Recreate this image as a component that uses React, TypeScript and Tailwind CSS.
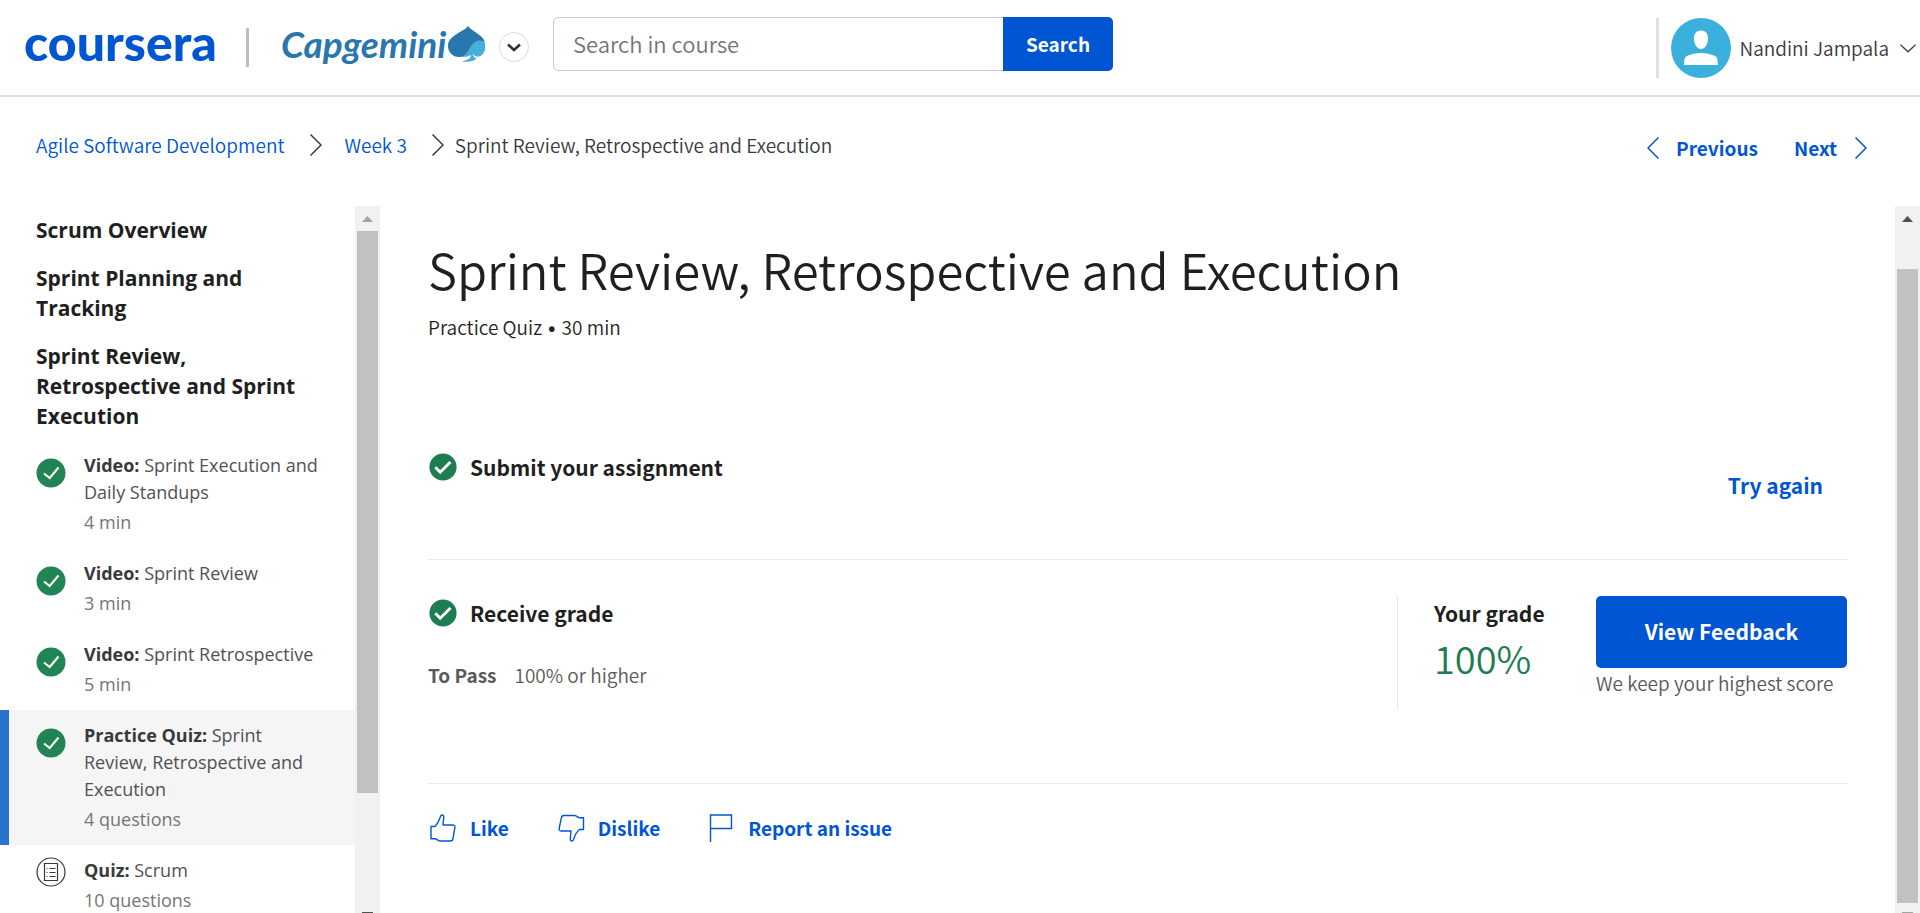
import type { ReactNode } from "react";

const sans = "font-['Noto_Sans_CJK_SC','Noto_Sans',sans-serif]";

function CheckBadge({ className }: { className: string }) {
  return (
    <svg viewBox="0 0 28 28" className={className} aria-hidden="true">
      <circle cx="14" cy="14" r="13.600" fill="currentColor" />
      <path d="M6.300 14.300l4.900 4.900L21.500 9" fill="none" stroke="#fff" strokeWidth="3" />
    </svg>
  );
}

function ThinCheckBadge({ className }: { className: string }) {
  return (
    <svg viewBox="0 0 30 30" className={className} aria-hidden="true">
      <circle cx="15" cy="15" r="14.500" fill="currentColor" />
      <path d="M8 15.500l5.700 4.500L22.500 9.500" fill="none" stroke="#fff" strokeWidth="2" />
    </svg>
  );
}

function QuizBadge() {
  return (
    <svg viewBox="0 0 30 30" className="size-[30px]" fill="none" stroke="#373a3c" aria-hidden="true">
      <circle cx="15" cy="15" r="14" strokeWidth="1.200" />
      <path d="M8.500 6.500h13v17h-13zM13.500 11.500h6M13.500 15.500h6M13.500 19.500h6M10.500 11.500h1M10.500 15.500h1M10.500 19.500h1" strokeWidth="1.200" />
    </svg>
  );
}

function Chevron({ left = false, className = "" }: { left?: boolean; className?: string }) {
  return (
    <svg viewBox="0 0 12 22" className={"h-[22px] w-3 shrink-0 " + className} fill="none" stroke="currentColor" strokeWidth="1.500" aria-hidden="true">
      <path d={left ? "M11.500.5L1 11l10.500 10.500" : "M.5.5L11 11 .5 21.500"} />
    </svg>
  );
}

function ScrollTrack({ arrow, children }: { arrow: string; children: ReactNode }) {
  return (
    <div className="flex w-[25px] shrink-0 flex-col bg-[#f1f1f1] px-[2px]" aria-hidden="true">
      <svg viewBox="0 0 21 25" className={"h-[25px] w-[21px] shrink-0 " + arrow}>
        <path d="M5 16l5.500-6 5.500 6z" fill="currentColor" />
      </svg>
      {children}
    </div>
  );
}

type Item = { kind: string; name: string; meta: string; done: boolean; active?: boolean };

const items: Item[] = [
  { kind: "Video:", name: "Sprint Execution and Daily Standups", meta: "4 min", done: true },
  { kind: "Video:", name: "Sprint Review", meta: "3 min", done: true },
  { kind: "Video:", name: "Sprint Retrospective", meta: "5 min", done: true },
  { kind: "Practice Quiz:", name: "Sprint Review, Retrospective and Execution", meta: "4 questions", done: true, active: true },
  { kind: "Quiz:", name: "Scrum", meta: "10 questions", done: false },
];

function Header() {
  return (
    <header className="flex h-[97px] shrink-0 items-start border-b-2 border-[#e1e1e1] pl-6">
      <a href="#home" className="mt-3 w-[192px] font-['Lato',sans-serif] text-[50px] leading-[60px] font-black text-[#0056d2]">
        coursera
      </a>
      <div className="mt-7 ml-[30px] h-[39px] w-[3px] bg-[#bdbdbd]" />
      <a href="#capgemini" className="mt-4 ml-8 flex items-start text-[#2a76ae]">
        <span className="w-[167px] font-['Lato',sans-serif] text-[37px] leading-[56px] font-bold italic">Capgemini</span>
        <svg viewBox="0 0 37 36" className="mt-[10px] h-9 w-[37px]" aria-hidden="true">
          <path d="M20 0C16 6 0 9 0 20c0 6 4.500 11 11 11 5 0 9-2.500 11-6.500 2-5 6-9 11-9.500 2 0 3.500 1 4 3C37 9 24 6 20 0z" fill="#2a76ae" />
          <path d="M37 18c-.5-3-3-4-6-3.500-5.500 1-8.500 5.500-11 10.500-2 3-4 5-7.500 5.800 4 .5 8-.3 10.500-1.800 0 3-3 5-9 6.200 5 1.200 11.500.5 14.500-2.500-2-1-3.500-2.500-4-5 2 2.500 5 3.500 7.500 2.500 4-1.500 6-7 5-12.200z" fill="#46aedb" />
        </svg>
      </a>
      <button type="button" aria-label="Switch program" className="mt-8 ml-[14px] flex size-[30px] items-center justify-center rounded-full border border-[#dcdcdc]">
        <svg viewBox="0 0 14 9" className="h-[9px] w-[14px]" fill="none" stroke="#2b3137" strokeWidth="2.600" aria-hidden="true">
          <path d="M1 1.500l6 5.500 6-5.500" />
        </svg>
      </button>
      <form className="mt-[17px] ml-6 flex h-[54px]">
        <input
          type="text"
          aria-label="Search in course"
          placeholder="Search in course"
          className="w-[450px] rounded-l-[5px] border border-r-0 border-[#c7cdd6] px-[19px] pb-px text-[22px] font-[350] placeholder:text-[#757575]"
        />
        <button type="button" className="w-[110px] rounded-r-[5px] bg-[#0056d2] text-[19px] font-bold text-white">
          Search
        </button>
      </form>
      <button type="button" className="mt-[18px] mr-1 ml-auto flex h-[60px] items-center border-l-[3px] border-[#e1e1e1] pl-3 text-[19px] font-[350] text-[#373a3c]">
        <svg viewBox="0 0 60 60" className="mr-[9px] size-[60px]" aria-hidden="true">
          <circle cx="30" cy="30" r="30" fill="#3cb0dd" />
          <path d="M30 12.500c4.500 0 7.200 3 7 8-.2 6-3 10.500-7 10.500s-6.800-4.500-7-10.500c-.2-5 2.500-8 7-8zM13 47c.3-6 .8-8.500 4-9.500 4-1.300 8-2.500 13-2.500s9 1.200 13 2.500c3.200 1 3.700 3.500 4 9.500z" fill="#fff" />
        </svg>
        Nandini Jampala
        <svg viewBox="0 0 16 9" className="ml-[11px] h-[9px] w-4" fill="none" stroke="#424242" strokeWidth="1.400" aria-hidden="true">
          <path d="M.5.8L8 7.800l7.500-7" />
        </svg>
      </button>
    </header>
  );
}

function Trail() {
  return (
    <div className="flex h-[109px] shrink-0 items-center justify-between pr-[53px] pb-2 pl-9 text-[19px] leading-7">
      <nav aria-label="Breadcrumb" className="flex items-center pb-[5px] font-[350]">
        <a href="#course" className="text-[#0056d2]">Agile Software Development</a>
        <Chevron className="ml-[26px] text-[#373a3c]" />
        <a href="#week3" className="ml-[22px] text-[#0056d2]">Week 3</a>
        <Chevron className="ml-[25px] text-[#373a3c]" />
        <span className="ml-[11px] text-[#373a3c]">Sprint Review, Retrospective and Execution</span>
      </nav>
      <nav aria-label="Lesson" className="flex items-center gap-9 font-bold text-[#0056d2]">
        <a href="#previous" className="flex items-center gap-[17px]">
          <Chevron left />
          Previous
        </a>
        <a href="#next" className="flex items-center gap-[18px]">
          Next
          <Chevron />
        </a>
      </nav>
    </div>
  );
}

function Sidebar() {
  return (
    <aside className="flex w-[380px] shrink-0 font-['Open_Sans',sans-serif]">
      <div className="min-w-0 flex-1 overflow-hidden">
        {["Scrum Overview", "Sprint Planning and Tracking", "Sprint Review, Retrospective and Sprint Execution"].map((t) => (
          <h2 key={t} className="py-[9px] pr-12 pl-9 text-[21px] leading-[30px] font-bold text-[#1f1f1f]">
            {t}
          </h2>
        ))}
        <ul>
          {items.map((it) => (
            <li key={it.kind + it.name}>
              <a
                href="#item"
                className={
                  "flex gap-[18px] border-l-[9px] py-3 pr-[30px] pl-[27px] text-[18px] leading-[27px] " +
                  (it.active ? "border-[#2a73cc] bg-[#f5f5f5]" : "border-transparent")
                }
              >
                <span className={"shrink-0 " + (it.done ? "pt-[6px]" : "")}>
                  {it.done ? <ThinCheckBadge className="size-[30px] text-[#208454]" /> : <QuizBadge />}
                </span>
                <span>
                  <span className="block text-[#4f5254]">
                    <strong className="font-bold text-[#373a3c]">{it.kind}</strong> {it.name}
                  </span>
                  <span className="mt-[3px] block text-[#757575]">{it.meta}</span>
                </span>
              </a>
            </li>
          ))}
        </ul>
      </div>
      <ScrollTrack arrow="text-[#a3a3a3]">
        <div className="h-[562px] bg-[#c1c1c1]" />
        <div className="mt-auto h-px w-[11px] self-center bg-[#505050]" />
      </ScrollTrack>
    </aside>
  );
}

function Content() {
  return (
    <main className="min-w-0 flex-1 overflow-hidden pr-12 pl-12">
      <h1 className="mt-[27px] text-[49px] leading-[72px] font-[350] text-[#1f1f1f]">Sprint Review, Retrospective and Execution</h1>
      <p className="mt-2 text-[19px] leading-7 font-[350] text-[#1f1f1f]">
        Practice Quiz <span className="font-['Lato',sans-serif]">•</span> 30 min
      </p>

      <section className="mt-[98px] flex items-start justify-between border-b border-[#e5e7e8] pb-[59px]">
        <h2 className="flex items-center gap-[13px] pt-3 pl-px text-[21px] leading-[30px] font-bold text-[#1f1f1f]">
          <CheckBadge className="size-7 text-[#1d7c50]" />
          Submit your assignment
        </h2>
        <button type="button" className="mt-[30px] mr-6 text-[21px] leading-[30px] font-bold text-[#0056d2]">
          Try again
        </button>
      </section>

      <section className="flex items-start border-b border-[#e5e7e8] pt-9 pb-[73px]">
        <div className="flex-1">
          <h2 className="flex items-center gap-[13px] pt-[2px] pl-px text-[21px] leading-[30px] font-bold text-[#1f1f1f]">
            <CheckBadge className="size-7 text-[#1d7c50]" />
            Receive grade
          </h2>
          <p className="mt-[33px] flex gap-[18px] text-[19px] leading-7 font-[350] text-[#5a5a5a]">
            <strong className="font-bold">To Pass</strong>
            <span>100% or higher</span>
          </p>
        </div>
        <div className="h-[114px] w-[199px] border-l border-[#e5e7e8] pt-[2px] pl-9">
          <h3 className="text-[21px] leading-[30px] font-bold text-[#1f1f1f]">Your grade</h3>
          <p className="text-[38px] leading-[60px] font-[350] text-[#1d7c50]">100%</p>
        </div>
        <div className="w-[251px]">
          <button type="button" className="h-[72px] w-full rounded-[5px] bg-[#0056d2] text-[21px] font-bold text-white">
            View Feedback
          </button>
          <p className="text-[19px] leading-[30px] font-[350] whitespace-nowrap text-[#5a5a5a]">We keep your highest score</p>
        </div>
      </section>

      <div className="mt-[30px] flex items-center gap-12 text-[19px] leading-7 font-bold text-[#0056d2]">
        <button type="button" className="flex items-center gap-[14px]">
          <svg viewBox="0 0 28 28" className="size-7" fill="none" stroke="currentColor" strokeWidth="1.400" strokeLinejoin="round" aria-hidden="true">
            <path d="M3 12.500h4c2-2 4-5.500 5.200-9.300.4-1.500.9-2.200 1.700-2.200 1.400 0 2 1 1.800 2.700L15 11h9.500c1.800 0 2.600.9 2.400 2.400l-1.900 11c-.2 1.600-1 2.600-2.500 2.600H12c-2.300 0-3.500-2.300-5-2.300H3z" />
          </svg>
          Like
        </button>
        <button type="button" className="flex items-center gap-[13px]">
          <svg viewBox="0 0 28 28" className="size-7" fill="none" stroke="currentColor" strokeWidth="1.400" strokeLinejoin="round" aria-hidden="true">
            <path d="M26.500 15.500h-4c-2 1.500-4.500 5.500-5.700 9.300-.4 1.500-.9 2.200-1.700 2.200-1.400 0-2-1-1.800-2.700l.7-7.300H4.500c-1.800 0-2.600-.9-2.400-2.400L4.300 4.100C4.600 2.300 5.400 1.500 7 1.500h10.500c2.500 0 3.500 2.300 5 2.300h4z" />
          </svg>
          Dislike
        </button>
        <button type="button" className="flex items-center gap-[14px]">
          <svg viewBox="0 0 26 28" className="h-7 w-[26px]" fill="none" stroke="currentColor" strokeWidth="1.400" aria-hidden="true">
            <path d="M2.500 28V1h21v13.500h-21" />
          </svg>
          Report an issue
        </button>
      </div>
    </main>
  );
}

export default function App() {
  return (
    <div className={"flex h-screen flex-col overflow-hidden bg-white " + sans}>
      <Header />
      <Trail />
      <div className="flex min-h-0 flex-1">
        <Sidebar />
        <Content />
        <ScrollTrack arrow="text-[#505050]">
          <div className="mt-[38px] mb-[9px] flex-1 bg-[#c1c1c1]" />
          <div className="h-px w-[11px] self-center bg-[#a3a3a3]" />
        </ScrollTrack>
      </div>
    </div>
  );
}
